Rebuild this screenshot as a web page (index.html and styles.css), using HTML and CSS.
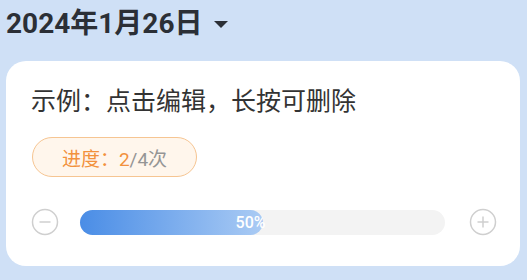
FILE: index.html
```html
<!DOCTYPE html>
<html lang="zh">
<head>
<meta charset="utf-8">
<link rel="stylesheet" href="styles.css">
</head>
<body>
<div class="page">
  <div class="header">
    <span class="date">2024年1月26日</span>
    <span class="caret"></span>
  </div>
  <div class="card">
    <div class="title">示例：点击编辑，长按可删除</div>
    <div class="badge"><span class="done">进度：2</span><span class="total">/4次</span></div>
    <div class="row">
      <svg class="icon" width="28" height="28" viewBox="0 0 28 28"><circle cx="14" cy="14" r="12.5" fill="none" stroke="#cfcfcf" stroke-width="1.5"/><line x1="8.5" y1="14" x2="19.5" y2="14" stroke="#cfcfcf" stroke-width="1.5"/></svg>
      <div class="bar">
        <div class="fill" style="width:50%"><span class="pct">50%</span></div>
      </div>
      <svg class="icon" width="28" height="28" viewBox="0 0 28 28"><circle cx="14" cy="14" r="12.5" fill="none" stroke="#cfcfcf" stroke-width="1.5"/><line x1="8.5" y1="14" x2="19.5" y2="14" stroke="#cfcfcf" stroke-width="1.5"/><line x1="14" y1="8.5" x2="14" y2="19.5" stroke="#cfcfcf" stroke-width="1.5"/></svg>
    </div>
  </div>
</div>
</body>
</html>
```
FILE: styles.css
```css
html, body {
  margin: 0;
  padding: 0;
}
body {
  background: #cfe0f6;
  font-family: Roboto, "Noto Sans CJK SC", sans-serif;
  width: 527px;
  height: 280px;
  overflow: hidden;
}
.page {
  display: flex;
  flex-direction: column;
}
.header {
  height: 47px;
  display: flex;
  align-items: center;
  padding-left: 6px;
}
.date {
  font-size: 28px;
  font-weight: 700;
  color: #2b2f36;
  line-height: 32px;
  margin-top: 1px;
}
.caret {
  width: 0;
  height: 0;
  border-left: 7.5px solid transparent;
  border-right: 7.5px solid transparent;
  border-top: 7px solid #2b2f36;
  margin-left: 12px;
  margin-top: 1px;
}
.card {
  margin: 14px 7px 0 6px;
  height: 205px;
  box-sizing: border-box;
  background: #ffffff;
  border-radius: 20px;
  padding: 24px 23px 0 25px;
  display: flex;
  flex-direction: column;
  align-items: flex-start;
}
.title {
  font-size: 25px;
  line-height: 34px;
  color: #333333;
}
.badge {
  margin-top: 18px;
  height: 40px;
  width: 165px;
  box-sizing: border-box;
  border: 1px solid #f6c592;
  background: #fff6ec;
  border-radius: 20px;
  display: flex;
  align-items: center;
  justify-content: center;
  font-size: 19px;
  margin-left: 1px;
}
.done {
  color: #f2913d;
}
.total {
  color: #959595;
}
.row {
  margin-top: 31px;
  align-self: stretch;
  display: flex;
  align-items: center;
  height: 28px;
}
.icon {
  flex: none;
  display: block;
}
.bar {
  flex: 1;
  margin: 0 24px 0 21px;
  height: 25px;
  border-radius: 12.5px;
  background: #f3f3f3;
  display: flex;
}
.fill {
  height: 100%;
  border-radius: 12.5px;
  background: linear-gradient(90deg, #4a8de6, #aacbf4);
  display: flex;
  align-items: center;
  justify-content: flex-end;
}
.pct {
  color: #ffffff;
  font-size: 16px;
  font-weight: 500;
  margin-right: -3px;
}
```
